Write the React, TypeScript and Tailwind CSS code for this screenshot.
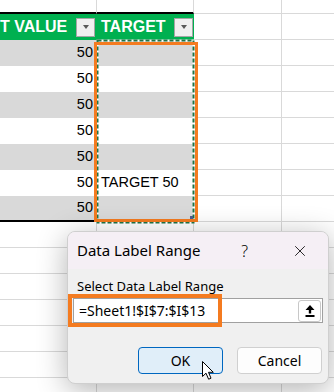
import { X } from 'lucide-react'

const GRID = 'border-[#d9d9d9]'

function FilterButton() {
  return (
    <div className="flex h-[19px] w-[19px] shrink-0 items-center justify-center border border-[#a6a6a6] bg-[#f0f0f0]">
      <div className="h-0 w-0 border-x-[3.5px] border-t-[4px] border-x-transparent border-t-[#595959]" />
    </div>
  )
}

function EmptyCells() {
  return (
    <>
      <div className={`h-full w-[88px] shrink-0 border-r border-b ${GRID}`} />
      <div className={`h-full w-[52px] shrink-0 border-b ${GRID}`} />
    </>
  )
}

function DataRow(props: { index: number }) {
  const shaded = props.index % 2 === 0
  const last = props.index === 6
  const cell = `h-full w-[97px] shrink-0 ${shaded ? 'bg-[#d9d9d9]' : 'bg-white'} ${last ? 'border-b-2 border-black' : ''}`
  return (
    <div className="flex h-[26px]">
      <div className={`${cell} flex items-center justify-end pr-[4px]`}>50</div>
      <div className={`${cell} flex items-center pl-[4px]`}>{props.index === 5 ? 'TARGET 50' : ''}</div>
      <EmptyCells />
    </div>
  )
}

export default function App() {
  return (
    <div className="relative h-[392px] w-[334px] overflow-hidden bg-white font-['Liberation_Sans',sans-serif] text-[14.5px] text-black">
      {/* sheet */}
      <div className="flex flex-col">
        <div className="flex h-[14px]">
          <div className={`h-full w-[97px] shrink-0 border-r ${GRID} border-b-2 border-b-black`} />
          <div className={`h-full w-[97px] shrink-0 border-r ${GRID} border-b-2 border-b-black`} />
          <EmptyCells />
        </div>
        <div className="flex h-[26px]">
          <div className="flex h-full w-[97px] shrink-0 items-center justify-between bg-[#00b050] pr-[2px] text-[16px] font-bold text-white">
            <span>T VALUE</span>
            <FilterButton />
          </div>
          <div className="flex h-full w-[97px] shrink-0 items-center justify-between bg-[#00b050] pl-[4px] pr-[1px] text-[16px] font-bold text-white">
            <span>TARGET</span>
            <FilterButton />
          </div>
          <EmptyCells />
        </div>
        {[0, 1, 2, 3, 4, 5, 6].map(i => (
          <DataRow index={i} key={i} />
        ))}
        {[0, 1, 2, 3, 4, 5, 6].map(i => (
          <div className="flex h-[26px]" key={i}>
            <div className={`h-full w-[97px] shrink-0 border-r border-b ${GRID}`} />
            <div className={`h-full w-[97px] shrink-0 border-r border-b ${GRID}`} />
            <EmptyCells />
          </div>
        ))}
      </div>

      {/* copy marquee + highlight */}
      <svg className="absolute left-[96px] top-[39px]" width="101" height="186">
        <rect x="1.5" y="1.5" width="96" height="182" fill="none" stroke="#fff" strokeWidth="2" />
        <rect x="1.5" y="1.5" width="96" height="182" fill="none" stroke="#217346" strokeWidth="2" strokeDasharray="4 2" />
      </svg>
      <div className="absolute left-[94px] top-[42px] h-[180px] w-[104px] border-[3px] border-[#f47b20]" />
      <div className="absolute left-[190px] top-[216px] h-[3px] w-[3px] bg-[#4d5b8f]" />

      {/* dialog */}
      <div className="absolute left-[67px] top-[231px] flex h-[153px] w-[262px] flex-col overflow-hidden rounded-[8px] border border-[#cfcfcf] bg-[#f0f0f0] font-['Noto_Sans',sans-serif] shadow-[0_6px_30px_rgba(0,0,0,0.3)]">
        <div className="flex h-[37px] shrink-0 items-center bg-[#f5eff5] pl-[9px] pr-[19px]">
          <span className="grow text-[15px]">Data Label Range</span>
          <span className="mr-[43px] text-[16px] font-light">?</span>
          <X size={18} strokeWidth={1.1} />
        </div>
        <div className="flex grow flex-col px-[5px]">
          <span className="ml-[4px] mt-[9px] text-[13px] leading-[16px]">Select Data Label Range</span>
          <div className="mt-[4px] flex h-[25px] items-center border border-[#a0a0a0] bg-white pl-[5px] pr-[1px]">
            <span className="grow text-[14px]">=Sheet1!$I$7:$I$13</span>
            <div className="flex h-[22px] w-[23px] items-center justify-center rounded-[3px] border border-[#c8c8c8] bg-white">
              <svg width="10" height="12" viewBox="0 0 10 12">
                <path d="M5 0 L9.5 5 L6.2 5 L6.2 8.6 L3.8 8.6 L3.8 5 L0.5 5 Z" fill="#000" />
                <rect x="0.5" y="10" width="9" height="2" fill="#000" />
              </svg>
            </div>
          </div>
          <div className="mt-[24px] flex justify-end gap-[14px] pr-[1px]">
            <button className="h-[27px] w-[85px] rounded-[4px] border border-[#0067c0] bg-[#e0eef9] text-[14px]">OK</button>
            <button className="h-[27px] w-[85px] rounded-[4px] border border-[#d0d0d0] bg-[#fdfdfd] text-[14px]">Cancel</button>
          </div>
        </div>
      </div>
      <div className="absolute left-[68px] top-[294px] h-[33px] w-[154px] border-4 border-[#f47b20]" />

      {/* cursor */}
      <svg className="absolute left-[202px] top-[361px]" width="14" height="20" viewBox="0 0 14 20">
        <path d="M0.5 0.5 L0.5 15.5 L4 12.2 L6.6 18.2 L9 17.2 L6.5 11.3 L11.3 11.3 Z" fill="#fff" stroke="#000" strokeWidth="1" strokeLinejoin="round" />
      </svg>
    </div>
  )
}
